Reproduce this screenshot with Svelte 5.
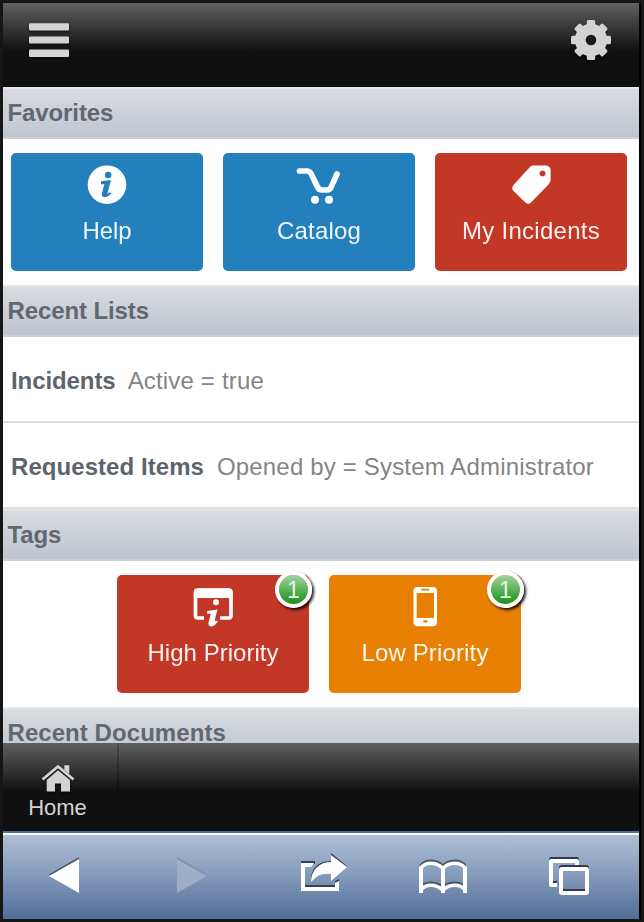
<script>
  const favorites = [
    { label: 'Help', icon: 'info', tone: 'blue', spacing: -0.05 },
    { label: 'Catalog', icon: 'cart', tone: 'blue', spacing: 0.15 },
    { label: 'My Incidents', icon: 'tag', tone: 'red', spacing: 0.27 },
  ];
  const tags = [
    { label: 'High Priority', icon: 'window', tone: 'red', spacing: 0.03, count: 1 },
    { label: 'Low Priority', icon: 'phone', tone: 'orange', spacing: 0.15, count: 1 },
  ];
  const lists = [
    { name: 'Incidents', filter: 'Active = true', spacing: -0.08, gap: 12 },
    { name: 'Requested Items', filter: 'Opened by = System Administrator', spacing: 0.06, gap: 13 },
  ];
</script>

{#snippet tile(t)}
  <div class="tile {t.tone}">
    <svg class="tile-icon" width="48" height="44" viewBox="0 0 48 44">
      {#if t.icon === 'info'}
        <circle cx="24" cy="21.7" r="19.3" fill="#fff" />
        <circle cx="25.2" cy="12" r="3.2" fill="#2380bd" />
        <path d="M18 18.2L28 17L24.6 30Q24.4 31.5 26 29.6L28.8 30Q25 34.2 21.3 34.2Q18 33.7 19 30L21.4 21.3L18 21.2Z" fill="#2380bd" />
      {:else if t.icon === 'cart'}
        <path d="M4.5 8H12.5Q14.8 8.2 16 10.5L22 23Q23.5 27 27 27H32Q35 27 36.3 23.7L42 11" fill="none" stroke="#fff" stroke-width="5.7" stroke-linecap="round" stroke-linejoin="round" />
        <circle cx="20" cy="36.7" r="4" fill="#fff" /><circle cx="34" cy="36.7" r="4" fill="#fff" />
      {:else if t.icon === 'tag'}
        <path fill-rule="evenodd" d="M25.5 2.5H39Q43.5 3 43.6 7V17Q43.4 19.6 41.5 21.5L24 39.5Q21.2 42 18.4 39.5L6 27.5Q4.2 25 6.5 22L22 5Q23.8 2.8 25.5 2.5ZM35.5 7.5a3 3 0 1 0 .1 0Z" fill="#fff" />
      {:else if t.icon === 'window'}
        <path d="M15 33H9Q6.5 33 6.5 30.5V7.5Q6.5 5 9 5H39.5Q42 5 42 7.5V30.5Q42 33 39.5 33H31" fill="none" stroke="#fff" stroke-width="3.7" />
        <path d="M5 13V7Q5 3.4 8.8 3.4H39.7Q43.5 3.4 43.5 7V13Z" fill="#fff" />
        <circle cx="27" cy="17.2" r="3" fill="#fff" />
        <path d="M18.2 26L28.5 24.4L25.8 35Q25.7 37 29.2 35.4Q26.3 41.4 21.5 41.4Q18.5 40.5 19.8 36.5L21.8 28.8L18.2 28.7Z" fill="#fff" />
      {:else}
        <path fill-rule="evenodd" d="M16.5 2H32Q36 2 36 6V37Q36 41.2 32 41.2H16.5Q12.5 41.2 12.5 37V6Q12.5 2 16.5 2ZM15.7 8V33H33V8ZM22.3 35.3V37.5H26.3V35.3ZM20.2 3.8V5.5H28.3V3.8Z" fill="#fff" />
      {/if}
    </svg>
    <span class="tile-label" style="letter-spacing: {t.spacing}px">{t.label}</span>
    {#if t.count}<span class="badge">{t.count}</span>{/if}
  </div>
{/snippet}

<div class="device">
  <div class="screen">
    <header>
      <svg width="64" height="84" viewBox="17 3 64 84" class="shadow">
        <g fill="#d3d3d3"><rect x="29" y="23.3" width="40" height="7.2" rx="1" /><rect x="29" y="36.6" width="40" height="7" rx="1" /><rect x="29" y="49.6" width="40" height="7.3" rx="1" /></g>
      </svg>
      <svg width="64" height="84" viewBox="559 3 64 84" class="shadow">
        <g fill="#d3d3d3" transform="translate(591 40)">
          {#each [0, 45, 90, 135] as angle}
            <rect x="-4.2" y="-20" width="8.4" height="40" rx="1.5" transform="rotate({angle})" />
          {/each}
          <circle r="16.2" />
        </g>
        <circle cx="591" cy="40" r="5.3" fill="#191919" />
      </svg>
    </header>
    <main>
      <h2>Favorites</h2>
      <div class="tiles">{#each favorites as t}{@render tile(t)}{/each}</div>
      <h2>Recent Lists</h2>
      {#each lists as row}
        <div class="row" style="gap: {row.gap}px"><b style="letter-spacing: {row.spacing}px">{row.name}</b><span>{row.filter}</span></div>
      {/each}
      <h2>Tags</h2>
      <div class="tiles">{#each tags as t}{@render tile(t)}{/each}</div>
      <h2 class="documents">Recent Documents</h2>
    </main>
    <nav class="tabs">
      <div class="tab">
        <svg width="36" height="30" viewBox="40 763 36 30" class="shadow">
          <path d="M42.5 779.5L58 766.5L73.5 779.5" fill="none" stroke="#d3d3d3" stroke-width="2.8" />
          <path d="M64.3 765.2H69.3V774L64.3 770Z" fill="#d3d3d3" />
          <path d="M46.7 780L58 770.3L70 780V791.5H61V783.5H55V791.5H46.7Z" fill="#d3d3d3" />
        </svg>
        <span>Home</span>
      </div>
    </nav>
    <nav class="browser">
      <svg width="125" height="84" viewBox="3 835 125 84"><path d="M49 874.5L79 857V891Z" fill="#44546d" /><path d="M49 876L79 859V893Z" fill="#fff" /></svg>
      <svg width="128" height="84" viewBox="128 835 128 84"><path d="M177 857L207 874.5L177 891Z" fill="#7890ae" /><path d="M177 859L207 876L177 893Z" fill="#9daec6" /></svg>
      <svg width="128" height="84" viewBox="256 835 128 84">
        <g fill="#354157"><rect x="301" y="861" width="14" height="3" /><path d="M311 880C311 866 321 861 331 861V853L347 866L331 878V872Q318 870 311 880Z" /><rect x="305" y="885" width="30" height="3" /><path d="M335 881L339 879V882H335Z" /></g>
        <path d="M314 863H301V891H339V881L335 883V887H305V867H311Z" fill="#fff" />
        <path d="M311 882C311 869 320 862 331 862V855L347 867L331 881V874Q319 872 311 882Z" fill="#fff" />
      </svg>
      <svg width="122" height="84" viewBox="384 835 122 84">
        <g fill="none" stroke="#46566c" stroke-width="3.6"><path d="M421 866Q424 861.2 431 861.2T443 866.5Q447 861.2 454.5 861.2T465 866M423 886Q426 883.2 431 883.2T441 886M445 886Q449 883.2 454.5 883.2T463 886" /></g>
        <g fill="none" stroke="#fff"><path d="M421 893V867M443 893V867M465 893V867" stroke-width="4" /><path d="M421 868Q424 863.2 431 863.2T443 868.5Q447 863.2 454.5 863.2T465 868M421 890Q424 885.2 431 885.2T443 890.5Q447 885.2 454.5 885.2T465 890" stroke-width="3.6" /></g>
      </svg>
      <svg width="133" height="84" viewBox="506 835 133 84">
        {#each [{ y: -2, c: '#303b50' }, { y: 0, c: '#fff' }] as layer}
          <g fill="none" stroke={layer.c} stroke-width="4" transform="translate(0 {layer.y})"><path d="M577 865V861H551V885H557" stroke-linejoin="round" /><rect x="561" y="869" width="26" height="24" rx="1" /></g>
        {/each}
      </svg>
    </nav>
  </div>
</div>

<style>
  :global(body) { margin: 0; }
  .device { box-sizing: border-box; width: 644px; height: 922px; padding: 3px; background: #161616; font: 24px/28px "Liberation Sans", Arial, sans-serif; white-space: nowrap; overflow: hidden; }
  .screen { width: 636px; height: 916px; display: flex; flex-direction: column; background: #fff; box-shadow: 2px 0 0 #020202; }
  header, .tabs { flex: none; background: linear-gradient(#606060 0, #101010 48px, #101010 100%); }
  header { height: 84px; display: flex; justify-content: space-between; padding: 0 16px 0 14px; }
  .shadow { filter: drop-shadow(0 2px 1px rgba(0, 0, 0, .55)); }
  main { height: 656px; flex: none; overflow: hidden; }
  h2 { box-sizing: border-box; height: 52px; margin: 0; padding: 10px 0 0 4.5px; border-top: 2px solid #e5e7eb; border-bottom: 2px solid #d0d1d3; background: linear-gradient(#d8dce0, #bfc5d0) padding-box; font: bold 24px/28px "Liberation Sans", Arial, sans-serif; letter-spacing: -.1px; color: #63676e; }
  .documents { letter-spacing: .06px; }
  .tiles { box-sizing: border-box; height: 146px; padding: 14px 12px 14px 8px; display: flex; justify-content: center; gap: 20px; }
  .tile { position: relative; width: 192px; height: 118px; border-radius: 5px; display: flex; flex-direction: column; align-items: center; color: #fff; }
  .tile-icon { margin-top: 10px; }
  .tile-label { margin-top: 10px; opacity: .93; }
  .blue { background: #2380bd; }
  .red { background: #c23725; }
  .orange { background: #e88004; }
  .badge { position: absolute; box-sizing: border-box; top: -4px; right: -3px; width: 37px; height: 37px; border: 4px solid #fff; border-radius: 50%; background: linear-gradient(#a4d3a4, #4dac4d 60%, #159018) padding-box; box-shadow: 2px 2px 3px rgba(0, 0, 0, .9); font-size: 23px; line-height: 31px; text-align: center; color: #e7f5e7; }
  .row { box-sizing: border-box; height: 86px; padding: 4px 8px 0; border-bottom: 2px solid #dcdcdc; display: flex; align-items: center; }
  .row b { color: #5d646c; }
  .row span { color: #858585; letter-spacing: .17px; }
  .tabs { height: 88px; }
  .tab { box-sizing: border-box; width: 116px; height: 88px; padding: 20px 5px 0 0; display: flex; flex-direction: column; align-items: center; border-style: solid; border-color: transparent; border-width: 0 2px 0 0; border-image: linear-gradient(#4c4c4c, #101010 50%, #0d0d0d) 1; font-size: 22px; line-height: 26px; color: #d3d3d3; }
  .tab span { margin-top: 2px; }
  .browser { box-sizing: border-box; height: 88px; display: flex; border-top: 2px solid #526f8d; box-shadow: inset 0 2px #f6f8fa; padding-top: 2px; background: linear-gradient(#b0c1d6, #8da2c0 40%, #506d98); }
</style>
